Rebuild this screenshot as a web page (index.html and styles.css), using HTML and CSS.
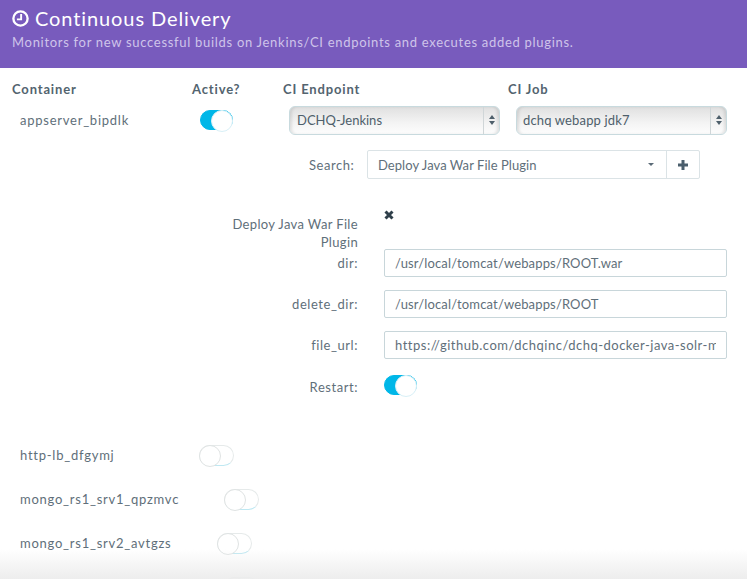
FILE: index.html
```html
<!DOCTYPE html>
<html lang="en">
<head>
  <meta charset="UTF-8" />
  <title>Continuous Delivery</title>
  <link rel="stylesheet" href="styles.css">
</head>
<body>

  <header class="banner">
    <h1>
      <svg class="clock" viewBox="0 0 16 16" width="17" height="17">
        <circle cx="8" cy="8" r="6.7" fill="none" stroke="#fff" stroke-width="2.2"/>
        <path d="M8.6 3.8v5H4.6" fill="none" stroke="#fff" stroke-width="1.8"/>
      </svg>
      Continuous Delivery
    </h1>
    <p>Monitors for new successful builds on Jenkins/CI endpoints and executes added plugins.</p>
  </header>

  <div class="heads">
    <span class="col-name">Container</span>
    <span class="col-active">Active?</span>
    <span class="col-endpoint">CI Endpoint</span>
    <span>CI Job</span>
  </div>

  <div class="main-row">
    <span class="name">appserver_bipdlk</span>
    <span class="toggle on main-toggle"></span>
    <div class="fake-select endpoint-select">DCHQ-Jenkins<span class="arrows"></span></div>
    <div class="fake-select">dchq webapp jdk7<span class="arrows"></span></div>
  </div>

  <div class="search-row">
    <label>Search:</label>
    <div class="search-box">
      <span class="search-value">Deploy Java War File Plugin</span>
      <span class="caret"></span>
      <span class="add">
        <svg viewBox="0 0 12 12" width="12" height="12"><path d="M6 1v10M1 6h10" stroke="#4a5e6c" stroke-width="3"/></svg>
      </span>
    </div>
  </div>

  <div class="plugin">
    <div class="plugin-head">
      <div class="plugin-title">Deploy Java War File Plugin</div>
      <svg class="remove" viewBox="0 0 10 10" width="10" height="10"><path d="M1.5 1.5l7 7M8.5 1.5l-7 7" stroke="#2f3f4a" stroke-width="3"/></svg>
    </div>
    <div class="field">
      <label>dir:</label>
      <input type="text" value="/usr/local/tomcat/webapps/ROOT.war">
    </div>
    <div class="field">
      <label>delete_dir:</label>
      <input type="text" value="/usr/local/tomcat/webapps/ROOT">
    </div>
    <div class="field">
      <label>file_url:</label>
      <input class="url" type="text" value="https://github.com/dchqinc/dchq-docker-java-solr-mongo-cassandra-example">
    </div>
    <div class="field restart">
      <label>Restart:</label>
      <span class="toggle on"></span>
    </div>
  </div>

  <div class="others">
    <div class="other lb"><span class="name">http-lb_dfgymj</span><span class="toggle"></span></div>
    <div class="other srv1"><span class="name">mongo_rs1_srv1_qpzmvc</span><span class="toggle"></span></div>
    <div class="other srv2"><span class="name">mongo_rs1_srv2_avtgzs</span><span class="toggle"></span></div>
    <div class="other srv3"><span class="name"></span><span class="toggle"></span></div>
  </div>

  <div class="fade"></div>

</body>
</html>
```

FILE: styles.css
```css
* { margin: 0; padding: 0; box-sizing: border-box; }

html, body {
  height: 579px;
  overflow: hidden;
}

body {
  font-family: 'Lato', sans-serif;
  font-size: 13px;
  letter-spacing: 0.55px;
  color: #5f6f7a;
  background: #fff;
}

.banner {
  height: 68px;
  padding: 5px 12px 0;
  background: #785bbd;
  color: #fff;
}

.banner h1 {
  display: flex;
  align-items: center;
  gap: 6px;
  font-size: 20px;
  font-weight: 400;
  line-height: 27px;
  letter-spacing: 0.9px;
}

.banner p {
  margin-top: 2px;
  font-size: 13px;
  line-height: 16px;
  letter-spacing: 0.7px;
  color: #cfc4ea;
}

.heads {
  display: flex;
  margin-top: 13px;
  padding-left: 12px;
  font-weight: 700;
  line-height: 17px;
  letter-spacing: 0.85px;
  color: #53646f;
}

.col-name { width: 180px; }
.col-active { width: 91px; }
.col-endpoint { width: 225px; }

.main-row {
  display: flex;
  align-items: center;
  height: 30px;
  margin-top: 7px;
  padding-left: 20px;
}

.name { letter-spacing: 0.75px; }
.main-row .name { width: 180px; }
.main-toggle { margin-right: 56px; }

.fake-select {
  position: relative;
  width: 211px;
  height: 29px;
  padding: 0 6px;
  line-height: 27px;
  letter-spacing: 0.15px;
  border: 1px solid #c8dade;
  border-radius: 6px;
  background: linear-gradient(#e0e0e0, #f4f4f4 60%, #fdfdfd);
  box-shadow: inset 3px 0 3px -1px rgba(0,0,0,0.1), inset -3px 0 3px -1px rgba(0,0,0,0.1);
  color: #4e5f6b;
}

.endpoint-select { width: 211px; margin-right: 16px; padding-left: 7px; letter-spacing: 0; }

.arrows {
  position: absolute;
  top: 0;
  right: 0;
  bottom: 0;
  width: 16px;
  border-left: 1px solid #d0d6d8;
}

.arrows::before, .arrows::after {
  content: "";
  position: absolute;
  left: 5px;
  border-left: 3px solid transparent;
  border-right: 3px solid transparent;
}

.arrows::before { top: 8px; border-bottom: 4px solid #4e5f6b; }
.arrows::after { top: 14px; border-top: 4px solid #4e5f6b; }

.search-row {
  display: flex;
  align-items: center;
  margin-top: 15px;
  padding-left: 309px;
}

.search-row label { width: 58px; }

.search-box {
  display: flex;
  align-items: center;
  width: 333px;
  height: 29px;
  border: 1px solid #dbe3e6;
  border-radius: 2px;
}

.search-value { flex: 1; padding-left: 10px; letter-spacing: 0.05px; }

.caret {
  margin-right: 12px;
  border-left: 3.5px solid transparent;
  border-right: 3.5px solid transparent;
  border-top: 3px solid #5b6b77;
}

.add {
  display: flex;
  align-items: center;
  justify-content: center;
  width: 33px;
  height: 100%;
  border-left: 1px solid #dbe3e6;
}

.plugin { margin-top: 28px; }

.plugin-head {
  display: flex;
  height: 42px;
}

.plugin-title {
  width: 358px;
  padding: 8px 0 0 220px;
  text-align: right;
  line-height: 18px;
  letter-spacing: 0.35px;
}

.remove { margin: 3px 0 0 26px; }

.field {
  display: flex;
  align-items: center;
  gap: 26px;
  height: 28px;
  margin-bottom: 13px;
}

.field label {
  width: 358px;
  text-align: right;
}

.field input {
  width: 343px;
  height: 28px;
  padding: 0 10px;
  border: 1px solid #c8d6da;
  border-radius: 2px;
  font: inherit;
  letter-spacing: 0.15px;
  color: #5f6f7a;
}

.field input.url { letter-spacing: 0.5px; }

.restart { margin-top: -1px; }
.restart label { padding-top: 3px; }

.toggle {
  position: relative;
  display: inline-block;
  flex: none;
  width: 35px;
  height: 21px;
  border-radius: 11px;
  border: 1px solid #e6eaea;
  border-bottom-color: #bfe8f2;
  background: #fff;
}

.toggle::after {
  content: "";
  position: absolute;
  top: -1px;
  left: -1px;
  width: 20px;
  height: 20px;
  border-radius: 50%;
  background: #fff;
  border: 1px solid #dfe3e3;
}

.toggle.on {
  width: 33px;
  height: 20px;
  border-color: #00b7e8;
  background: #00b7e8;
}

.toggle.on::after {
  left: auto;
  right: -1px;
  border-color: #d8f0f7;
}

.others { margin-top: 46px; }

.other {
  display: flex;
  align-items: center;
  height: 20px;
  margin-bottom: 24px;
  padding-left: 20px;
}

.lb .name { width: 179px; }
.srv1 .name { width: 204px; }
.srv2 .name { width: 197px; }
.srv3 .name { width: 204px; }

.fade {
  position: absolute;
  left: 0;
  right: 0;
  top: 549px;
  height: 30px;
  background: linear-gradient(rgba(236,236,236,0), rgba(236,236,236,0.95));
}
```
